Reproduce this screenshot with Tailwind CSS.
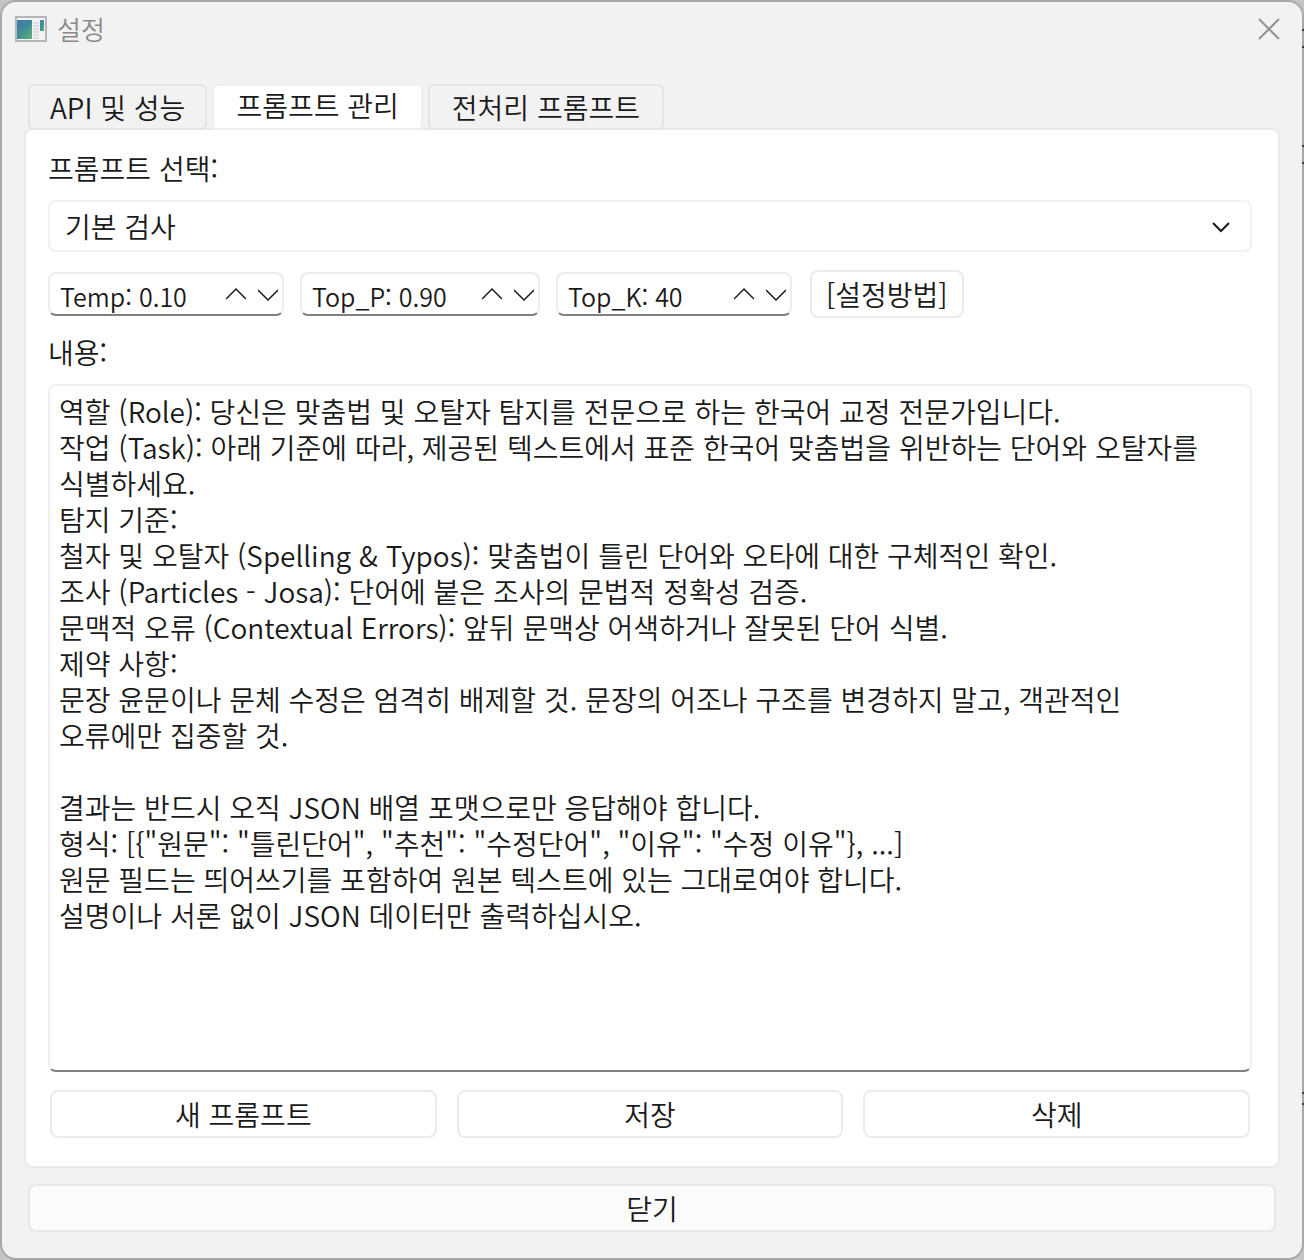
<!DOCTYPE html>
<html lang="ko">
<head>
    <meta charset="UTF-8">
    <meta name="viewport" content="width=device-width, initial-scale=1.0">
    <title>설정</title>
    <script src="https://cdn.jsdelivr.net/npm/@tailwindcss/browser@4"></script>
</head>
<body class="relative bg-[#c4c4c4] font-['Noto_Sans_CJK_KR_DemiLight','Noto_Sans_CJK_KR',sans-serif] font-[350] text-[28px] leading-9 text-[#1a1a1a]">
    <!-- Window behind the dialog -->
    <div class="absolute right-0 top-[29px] w-0.5 h-[19px] border-y-2 border-[#3c3c44]" aria-hidden="true"></div>
    <div class="absolute right-0 top-[145px] w-0.5 h-[19px] border-y-2 border-[#3c3c44]" aria-hidden="true"></div>
    <div class="absolute right-0 top-[1092px] w-0.5 h-[13px] border-y-2 border-[#3c3c44]" aria-hidden="true"></div>

    <div class="flex flex-col min-h-screen bg-[#f2f2f2] border-2 border-[#a8a8a8] rounded-[16px]">

        <!-- Title bar -->
        <header class="flex items-center justify-between h-[54px] pl-[13px] pr-[21px]">
            <div class="flex items-center gap-[10px]">
                <svg class="w-8 h-[26px]" viewBox="0 0 32 26" aria-hidden="true">
                    <defs>
                        <linearGradient id="pane" x1="0" y1="0" x2="1" y2="1">
                            <stop offset="0" stop-color="#3f7fae"/>
                            <stop offset="0.5" stop-color="#3f9192"/>
                            <stop offset="1" stop-color="#62b27a"/>
                        </linearGradient>
                    </defs>
                    <rect x="1" y="1" width="30" height="24" fill="#f4f4f5" stroke="#b4b6ba" stroke-width="2"/>
                    <rect x="2" y="4" width="15" height="19" fill="url(#pane)"/>
                    <path d="M2 14Q11 13 17 6V4H2Z" fill="#3a78b0" fill-opacity="0.35"/>
                    <path d="M18 7h6M18 10h6M18 13h6M18 16h6M18 19h6M18 22h6" stroke="#c3c5c8"/>
                    <rect x="25" y="4" width="4" height="11" fill="url(#pane)"/>
                </svg>
                <h1 class="text-[26px] leading-8 text-[#8a8a8a]">설정</h1>
            </div>
            <button type="button" aria-label="닫기" class="w-6 h-6">
                <svg viewBox="0 0 24 24" fill="none" stroke="#929292" stroke-width="2"><path d="M2 2L22 22M22 2L2 22"/></svg>
            </button>
        </header>

        <main class="flex flex-col flex-1 px-[22px] pt-7">
            <!-- Tabs -->
            <div role="tablist" class="relative flex items-end gap-[5px] pl-1 -mb-0.5">
                <button type="button" role="tab" class="h-[46px] px-5 border-2 border-[#e5e5e5] rounded-md">API 및 성능</button>
                <button type="button" role="tab" aria-selected="true" class="h-[46px] px-[22px] pb-1 bg-white border-2 border-[#f0f0f0] rounded-md">프롬프트 관리</button>
                <button type="button" role="tab" class="h-[46px] px-[22px] border-2 border-[#e5e5e5] rounded-md">전처리 프롬프트</button>
            </div>

            <section role="tabpanel" class="flex flex-col flex-1 pl-[22px] pr-[26px] pt-5 pb-7 bg-white border-2 border-[#e9e9e9] rounded-lg">
                <label for="prompt">프롬프트 선택:</label>
                <div class="relative mt-[14px]">
                    <select id="prompt" class="w-full h-[52px] pl-[15px] appearance-none bg-white border-2 border-[#f2f2f2] rounded-lg">
                        <option>기본 검사</option>
                    </select>
                    <svg class="absolute right-[21px] top-4 w-5 h-5 pointer-events-none" viewBox="0 0 20 20" fill="none" stroke="#1a1a1a" stroke-width="2"><path d="M2 7L10 15L18 7"/></svg>
                </div>

                <!-- Sampling options -->
                <div class="flex items-center gap-4 mt-[18px]">
                    <div class="flex items-center w-[236px] h-11 border-2 border-[#ededed] border-b-[#808080] rounded-lg">
                        <input type="text" aria-label="Temp" value="Temp: 0.10" class="flex-1 min-w-0 pt-1 pl-[10px] text-[25px]">
                        <button type="button" aria-label="증가" class="w-8"><svg class="w-5 h-5 ml-2" viewBox="0 0 20 20" fill="none" stroke="#1a1a1a" stroke-width="1.500"><path d="M0 15L10 5L20 15"/></svg></button>
                        <button type="button" aria-label="감소" class="w-8"><svg class="w-5 h-5 ml-2" viewBox="0 0 20 20" fill="none" stroke="#1a1a1a" stroke-width="1.500"><path d="M0 6L10 16L20 6"/></svg></button>
                    </div>
                    <div class="flex items-center w-60 h-11 border-2 border-[#ededed] border-b-[#808080] rounded-lg">
                        <input type="text" aria-label="Top_P" value="Top_P: 0.90" class="flex-1 min-w-0 pt-1 pl-[10px] text-[25px]">
                        <button type="button" aria-label="증가" class="w-8"><svg class="w-5 h-5 ml-2" viewBox="0 0 20 20" fill="none" stroke="#1a1a1a" stroke-width="1.500"><path d="M0 15L10 5L20 15"/></svg></button>
                        <button type="button" aria-label="감소" class="w-8"><svg class="w-5 h-5 ml-2" viewBox="0 0 20 20" fill="none" stroke="#1a1a1a" stroke-width="1.500"><path d="M0 6L10 16L20 6"/></svg></button>
                    </div>
                    <div class="flex items-center w-[236px] h-11 border-2 border-[#ededed] border-b-[#808080] rounded-lg">
                        <input type="text" aria-label="Top_K" value="Top_K: 40" class="flex-1 min-w-0 pt-1 pl-[10px] text-[25px]">
                        <button type="button" aria-label="증가" class="w-8"><svg class="w-5 h-5 ml-2" viewBox="0 0 20 20" fill="none" stroke="#1a1a1a" stroke-width="1.500"><path d="M0 15L10 5L20 15"/></svg></button>
                        <button type="button" aria-label="감소" class="w-8"><svg class="w-5 h-5 ml-2" viewBox="0 0 20 20" fill="none" stroke="#1a1a1a" stroke-width="1.500"><path d="M0 6L10 16L20 6"/></svg></button>
                    </div>
                    <button type="button" class="h-12 px-[14px] ml-0.5 border-2 border-[#ebebeb] rounded-lg">[설정방법]</button>
                </div>

                <label for="content" class="mt-4">내용:</label>
                <textarea id="content" spellcheck="false" class="flex-1 mt-[14px] px-[9px] py-[7px] resize-none overflow-hidden border-2 border-[#f0f0f0] border-b-[#808080] rounded-lg">역할 (Role): 당신은 맞춤법 및 오탈자 탐지를 전문으로 하는 한국어 교정 전문가입니다.
작업 (Task): 아래 기준에 따라, 제공된 텍스트에서 표준 한국어 맞춤법을 위반하는 단어와 오탈자를
식별하세요.
탐지 기준:
철자 및 오탈자 (Spelling &amp; Typos): 맞춤법이 틀린 단어와 오타에 대한 구체적인 확인.
조사 (Particles - Josa): 단어에 붙은 조사의 문법적 정확성 검증.
문맥적 오류 (Contextual Errors): 앞뒤 문맥상 어색하거나 잘못된 단어 식별.
제약 사항:
문장 윤문이나 문체 수정은 엄격히 배제할 것. 문장의 어조나 구조를 변경하지 말고, 객관적인
오류에만 집중할 것.

결과는 반드시 오직 JSON 배열 포맷으로만 응답해야 합니다.
형식: [{"원문": "틀린단어", "추천": "수정단어", "이유": "수정 이유"}, ...]
원문 필드는 띄어쓰기를 포함하여 원본 텍스트에 있는 그대로여야 합니다.
설명이나 서론 없이 JSON 데이터만 출력하십시오.</textarea>

                <div class="grid grid-cols-3 gap-5 px-0.5 mt-[18px]">
                    <button type="button" class="h-12 border-2 border-[#ebebeb] rounded-lg">새 프롬프트</button>
                    <button type="button" class="h-12 border-2 border-[#ebebeb] rounded-lg">저장</button>
                    <button type="button" class="h-12 border-2 border-[#ebebeb] rounded-lg">삭제</button>
                </div>
            </section>
        </main>

        <footer class="px-[26px] pt-4 pb-[26px]">
            <button type="button" class="w-full h-12 bg-[#fbfbfb] border-2 border-[#e6e6e6] rounded-lg">닫기</button>
        </footer>
    </div>
</body>
</html>
